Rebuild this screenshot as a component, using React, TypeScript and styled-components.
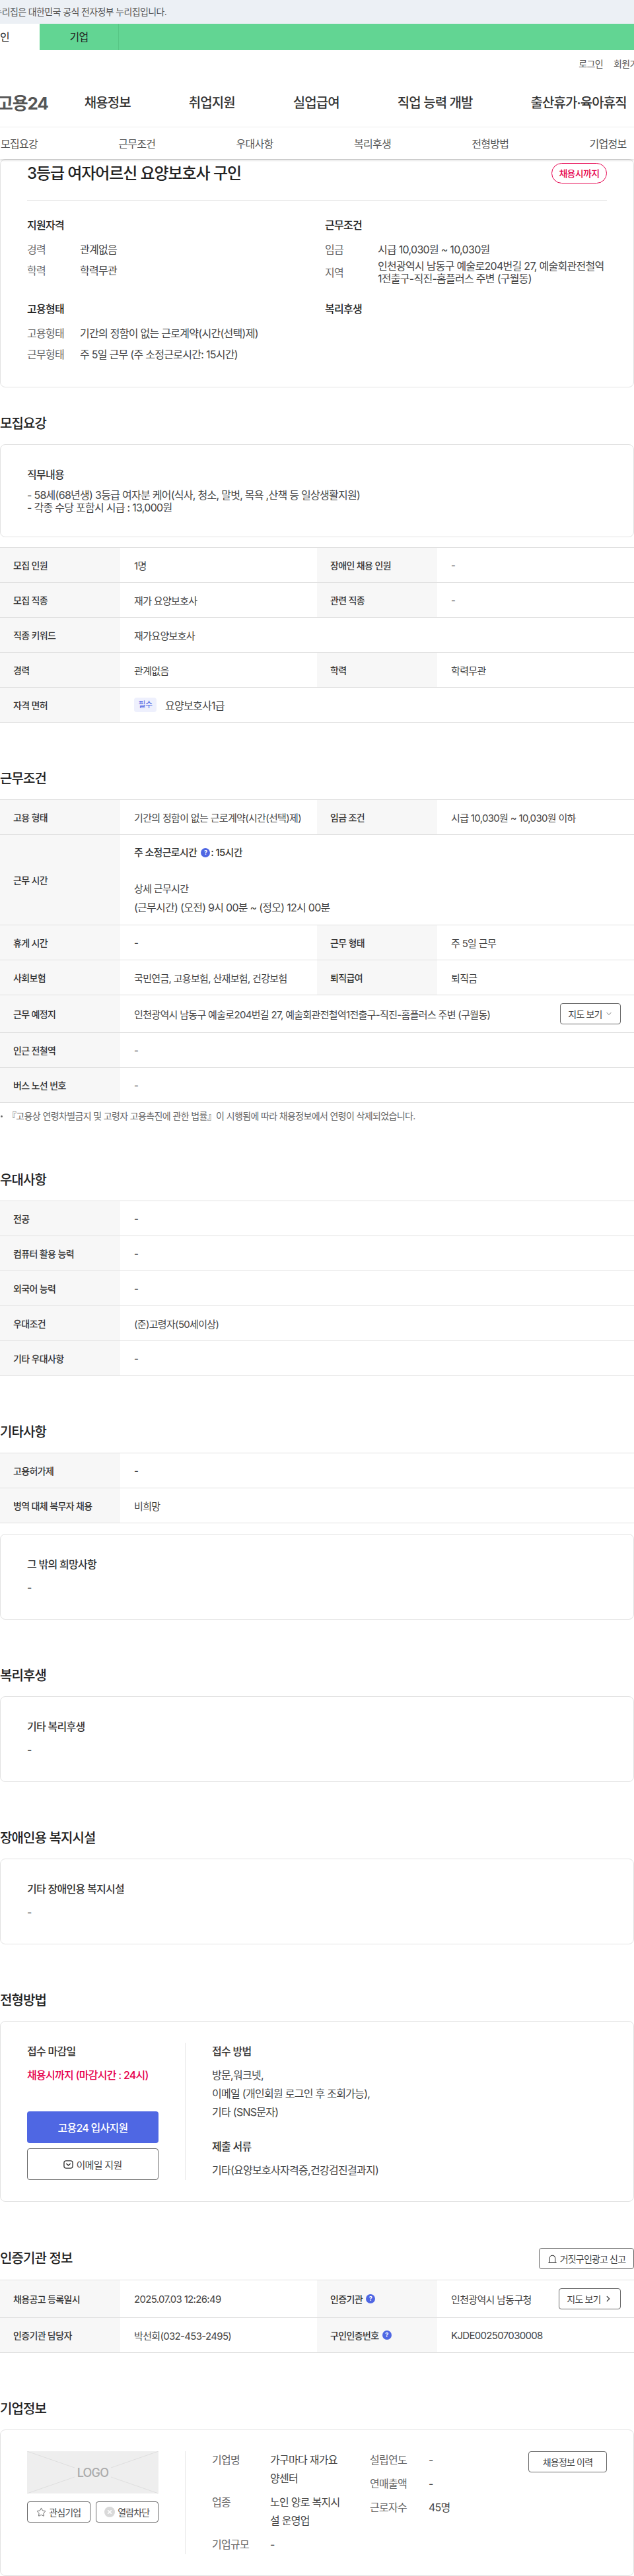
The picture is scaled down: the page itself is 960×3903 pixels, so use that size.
import * as React from 'react';
import styled, { createGlobalStyle } from 'styled-components';
import { ChevronDown, ChevronRight, Star } from 'lucide-react';

const GlobalStyle = createGlobalStyle`
  html, body {
    margin: 0;
    padding: 0;
    background: #fff;
  }
  body {
    font-family: Inter, "Noto Sans CJK KR", "Noto Sans", sans-serif;
    color: #444;
    font-size: 15px;
  }
  * {
    box-sizing: border-box;
    letter-spacing: -0.045em;
  }
`;

const Page = styled.div`
  width: 960px;
  height: 3903px;
  overflow: hidden;
  position: relative;
`;

const GovBanner = styled.div`
  height: 36px;
  background: #ecf0f5;
  color: #555;
  font-size: 14px;
  line-height: 36px;
  white-space: nowrap;
  & > span {
    margin-left: -25px;
    display: inline-block;
  }
`;

const TabBar = styled.div`
  height: 40px;
  background: #62d593;
  display: flex;
  margin-left: -60px;
`;

const Tab = styled.div<{ $active?: boolean }>`
  width: 120px;
  text-align: center;
  line-height: 40px;
  font-size: 16px;
  color: #222;
  background: ${p => (p.$active ? '#fff' : 'transparent')};
  border-right: ${p => (p.$active ? '0' : '1px solid #57c685')};
`;

const UtilBar = styled.div`
  height: 40px;
  display: flex;
  justify-content: flex-end;
  align-items: center;
  gap: 16px;
  margin-right: -18px;
  font-size: 14px;
  color: #555;
`;

const MainNav = styled.nav`
  height: 76px;
  display: flex;
  align-items: center;
  gap: 88px;
  white-space: nowrap;
`;

const Logo = styled.div`
  font-size: 26px;
  font-weight: 700;
  color: #555;
  margin-left: -4px;
  margin-right: -33px;
`;

const NavItem = styled.a`
  font-size: 20px;
  font-weight: 500;
  color: #333;
`;

const SubNav = styled.div`
  height: 49px;
  border-top: 1px solid #eeeeee;
  display: grid;
  grid-template-columns: repeat(6, 178.3px);
  align-items: center;
  padding-left: 1px;
  position: relative;
  z-index: 2;
  box-shadow: 0 2px 3px rgba(0, 0, 0, 0.14);
  background: #fff;
  font-size: 16px;
  color: #555;
`;

const Card = styled.div`
  border: 1px solid #e2e2e2;
  border-radius: 8px;
  background: #fff;
`;

const SummaryCard = styled(Card)`
  height: 346px;
  padding: 0 40px;
`;

const TitleRow = styled.div`
  height: 62px;
  display: flex;
  justify-content: space-between;
  padding-top: 5px;
  border-bottom: 1px solid #e6e6e6;
`;

const JobTitle = styled.h1`
  margin: 0;
  font-size: 24px;
  line-height: 32px;
  font-weight: 500;
  color: #222;
`;

const DeadlinePill = styled.div`
  width: 84px;
  height: 31px;
  border: 1px solid #e6004d;
  border-radius: 16px;
  color: #e6004d;
  font-size: 14px;
  font-weight: 500;
  line-height: 29px;
  text-align: center;
`;

const SummaryGrid = styled.div`
  display: grid;
  grid-template-columns: 451px 427px;
  row-gap: 26px;
  padding-top: 27px;
`;

const GroupTitle = styled.div`
  font-size: 16px;
  line-height: 20px;
  font-weight: 500;
  color: #222;
  margin-bottom: 11px;
`;

const SummaryRow = styled.div`
  min-height: 32px;
  display: flex;
  align-items: center;
  font-size: 16px;
  line-height: 19px;
`;

const SummaryLabel = styled.div`
  width: 80px;
  flex: none;
  color: #666;
`;

const SummaryValue = styled.div`
  flex: 1;
  color: #444;
  white-space: nowrap;
`;

const Section = styled.section<{ $gap?: number }>`
  margin-top: ${p => p.$gap ?? 71}px;
`;

const Heading = styled.h2`
  margin: 0 0 17px;
  font-size: 20px;
  line-height: 28px;
  font-weight: 500;
  color: #222;
`;

const HeadingRow = styled.div`
  height: 32px;
  display: flex;
  justify-content: space-between;
  align-items: center;
  margin-bottom: 16px;
  & > h2 {
    margin: 0;
  }
`;

const TextCard = styled(Card)<{ $height: number; $mt?: number; $mb?: number }>`
  height: ${p => p.$height}px;
  padding: 35px 40px 0;
  margin-top: ${p => p.$mt ?? 0}px;
  margin-bottom: ${p => p.$mb ?? 0}px;
`;

const CardTitle = styled.div`
  font-size: 16px;
  line-height: 20px;
  font-weight: 500;
  color: #333;
`;

const CardBody = styled.div<{ $mt?: number }>`
  margin-top: ${p => p.$mt ?? 16}px;
  font-size: 16px;
  line-height: 19px;
  color: #444;
  white-space: pre-line;
`;

const Table = styled.div`
  border-top: 1px solid #e0e0e0;
`;

const Row = styled.div<{ $h?: number }>`
  height: ${p => p.$h ?? 53}px;
  display: grid;
  grid-template-columns: 182px 298px 182px 298px;
  border-bottom: 1px solid #e0e0e0;
`;

const Label = styled.div`
  background: #f7f7f7;
  padding-left: 20px;
  display: flex;
  align-items: center;
  gap: 5px;
  font-size: 14px;
  font-weight: 500;
  color: #333;
`;

const Value = styled.div<{ $wide?: boolean }>`
  grid-column: ${p => (p.$wide ? 'span 3' : 'auto')};
  padding: 0 20px 0 21px;
  display: flex;
  align-items: center;
  justify-content: space-between;
  color: #444;
  white-space: nowrap;
`;

const WorkHours = styled.div`
  grid-column: span 3;
  padding-left: 21px;
  display: flex;
  flex-direction: column;
  justify-content: center;
  line-height: 20px;
  color: #444;
`;

const WeeklyHours = styled.div`
  font-weight: 500;
  color: #333;
  display: flex;
  align-items: center;
  margin-bottom: 35px;
`;

const WorkDetail = styled.div`
  margin-bottom: 8px;
`;

const WorkSchedule = styled.div`
  font-size: 16px;
`;

const HelpDot = styled.span`
  width: 14px;
  height: 14px;
  border-radius: 50%;
  background: #4f67e3;
  color: #fff;
  font-size: 9px;
  font-weight: 700;
  line-height: 14px;
  text-align: center;
`;

const InlineHelpDot = styled(HelpDot)`
  margin: 0 1px 0 6px;
`;

const RequiredBadge = styled.span`
  width: 34px;
  height: 22px;
  margin-right: 13px;
  border-radius: 4px;
  background: #eef0fd;
  color: #4f67e3;
  font-size: 12px;
  line-height: 22px;
  text-align: center;
`;

const LicenseValue = styled.div`
  grid-column: span 3;
  padding-left: 21px;
  display: flex;
  align-items: center;
  font-size: 16px;
`;

const OutlineButton = styled.button<{ $w?: number; $h?: number }>`
  width: ${p => (p.$w ? `${p.$w}px` : 'auto')};
  height: ${p => p.$h ?? 32}px;
  flex: ${p => (p.$w ? 'none' : '1')};
  padding: 0;
  border: 1px solid #666;
  border-radius: 4px;
  background: #fff;
  display: flex;
  align-items: center;
  justify-content: center;
  gap: 4px;
  font-family: inherit;
  font-size: 14px;
  letter-spacing: -0.06em;
  color: #444;
  white-space: nowrap;
`;

const EmailButton = styled(OutlineButton)`
  font-size: 15px;
  letter-spacing: -0.045em;
`;

const FootNote = styled.p`
  margin: 11px 0 0;
  padding-left: 1px;
  font-size: 14px;
  line-height: 18px;
  color: #666;
  white-space: nowrap;
  &::before {
    content: '';
    display: inline-block;
    width: 3px;
    height: 3px;
    margin: 0 7px 3px 0;
    border-radius: 50%;
    background: #666;
  }
`;

const SplitCard = styled(Card)<{ $height: number }>`
  height: ${p => p.$height}px;
  padding: 32px 40px;
  display: flex;
`;

const SideColumn = styled.div`
  width: 240px;
  flex: none;
  padding-right: 40px;
  border-right: 1px solid #e6e6e6;
  display: flex;
  flex-direction: column;
`;

const MainColumn = styled.div`
  flex: 1;
  padding-left: 40px;
  position: relative;
`;

const ColumnTitle = styled.div`
  margin-top: 3px;
  font-size: 16px;
  line-height: 20px;
  font-weight: 500;
  color: #333;
`;

const DeadlineText = styled.div`
  margin: 16px 0 45px;
  font-size: 16px;
  line-height: 20px;
  font-weight: 500;
  color: #e6004d;
`;

const ApplyButton = styled.button`
  height: 48px;
  padding: 0;
  border: 0;
  border-radius: 4px;
  background: #4f67e3;
  color: #fff;
  font-family: inherit;
  font-size: 16px;
  font-weight: 500;
  margin-bottom: 8px;
`;

const MethodList = styled.div`
  margin-top: 12px;
  font-size: 16px;
  line-height: 28px;
  color: #444;
  white-space: pre-line;
`;

const DocsTitle = styled(ColumnTitle)`
  margin-top: 28px;
`;

const LogoBox = styled.div`
  height: 64px;
  position: relative;
  background: #eeeeee;
  display: flex;
  align-items: center;
  justify-content: center;
  color: #aaa;
  font-size: 18px;
  font-weight: 500;
  & > svg {
    position: absolute;
    inset: 0;
  }
  & > span {
    position: relative;
  }
`;

const CompanyActions = styled.div`
  margin-top: 12px;
  display: flex;
  gap: 8px;
`;

const CompanyInfo = styled.div`
  display: flex;
  margin-top: -1px;
`;

const InfoColumn = styled.div<{ $w: number; $labelW: number; $valueW: number }>`
  width: ${p => p.$w}px;
  flex: none;
  display: grid;
  grid-template-columns: ${p => p.$labelW}px ${p => p.$valueW}px;
  row-gap: 8px;
  align-content: start;
  font-size: 16px;
  line-height: 28px;
`;

const InfoLabel = styled.div`
  color: #666;
`;

const InfoValue = styled.div`
  color: #444;
  word-break: break-all;
`;

const HistoryButton = styled(OutlineButton)`
  position: absolute;
  top: 0;
  right: 0;
`;

function MailIcon() {
  return (
    <svg width="15" height="15" viewBox="0 0 16 16" fill="none" stroke="#333" strokeWidth="1.5">
      <rect x="1" y="2" width="14" height="12" rx="3.5" />
      <path d="M5 7l3 2.5L11 7" strokeLinecap="round" strokeLinejoin="round" />
    </svg>
  );
}

function SirenIcon() {
  return (
    <svg width="15" height="15" viewBox="0 0 16 16" fill="none" stroke="#333" strokeWidth="1.1">
      <path d="M1.5 14h13M3.5 14V7a4.5 4.5 0 0 1 9 0v7" />
    </svg>
  );
}

function BlockIcon() {
  return (
    <svg width="16" height="16" viewBox="0 0 16 16">
      <circle cx="8" cy="8" r="8" fill="#d9d9d9" />
      <path d="M5.2 5.2l5.6 5.6M10.8 5.2l-5.6 5.6" stroke="#fff" strokeWidth="1.6" />
    </svg>
  );
}

function LogoPlaceholder() {
  return (
    <LogoBox>
      <svg width="199" height="64" viewBox="0 0 199 64" stroke="#dedede" fill="none">
        <path d="M0 0l72 25M199 0l-72 25M0 64l72-25M199 64l-72-25" />
      </svg>
      <span>LOGO</span>
    </LogoBox>
  );
}

const navItems = ['채용정보', '취업지원', '실업급여', '직업 능력 개발', '출산휴가·육아휴직'];
const subNavItems = ['모집요강', '근무조건', '우대사항', '복리후생', '전형방법', '기업정보'];

function App() {
  return (
    <Page>
      <GlobalStyle />
      <GovBanner>
        <span>이 누리집은 대한민국 공식 전자정부 누리집입니다.</span>
      </GovBanner>
      <TabBar>
        <Tab $active>개인</Tab>
        <Tab>기업</Tab>
      </TabBar>
      <UtilBar>
        <span>로그인</span>
        <span>회원가입</span>
      </UtilBar>
      <MainNav>
        <Logo>고용24</Logo>
        {navItems.map(item => (
          <NavItem key={item}>{item}</NavItem>
        ))}
      </MainNav>
      <SubNav>
        {subNavItems.map(item => (
          <span key={item}>{item}</span>
        ))}
      </SubNav>

      <SummaryCard>
        <TitleRow>
          <JobTitle>3등급 여자어르신 요양보호사 구인</JobTitle>
          <DeadlinePill>채용시까지</DeadlinePill>
        </TitleRow>
        <SummaryGrid>
          <div>
            <GroupTitle>지원자격</GroupTitle>
            <SummaryRow>
              <SummaryLabel>경력</SummaryLabel>
              <SummaryValue>관계없음</SummaryValue>
            </SummaryRow>
            <SummaryRow>
              <SummaryLabel>학력</SummaryLabel>
              <SummaryValue>학력무관</SummaryValue>
            </SummaryRow>
          </div>
          <div>
            <GroupTitle>근무조건</GroupTitle>
            <SummaryRow>
              <SummaryLabel>임금</SummaryLabel>
              <SummaryValue>시급 10,030원 ~ 10,030원</SummaryValue>
            </SummaryRow>
            <SummaryRow>
              <SummaryLabel>지역</SummaryLabel>
              <SummaryValue>
                인천광역시 남동구 예술로204번길 27, 예술회관전철역
                <br />
                1전출구-직진-홈플러스 주변 (구월동)
              </SummaryValue>
            </SummaryRow>
          </div>
          <div>
            <GroupTitle>고용형태</GroupTitle>
            <SummaryRow>
              <SummaryLabel>고용형태</SummaryLabel>
              <SummaryValue>기간의 정함이 없는 근로계약(시간(선택)제)</SummaryValue>
            </SummaryRow>
            <SummaryRow>
              <SummaryLabel>근무형태</SummaryLabel>
              <SummaryValue>주 5일 근무 (주 소정근로시간: 15시간)</SummaryValue>
            </SummaryRow>
          </div>
          <div>
            <GroupTitle>복리후생</GroupTitle>
          </div>
        </SummaryGrid>
      </SummaryCard>

      <Section $gap={41}>
        <Heading>모집요강</Heading>
        <TextCard $height={141} $mb={15}>
          <CardTitle>직무내용</CardTitle>
          <CardBody $mt={12}>
            {'- 58세(68년생) 3등급 여자분 케어(식사, 청소, 말벗, 목욕 ,산책 등 일상생활지원)\n- 각종 수당 포함시 시급 : 13,000원'}
          </CardBody>
        </TextCard>
        <Table>
          <Row>
            <Label>모집 인원</Label>
            <Value>1명</Value>
            <Label>장애인 채용 인원</Label>
            <Value>-</Value>
          </Row>
          <Row>
            <Label>모집 직종</Label>
            <Value>재가 요양보호사</Value>
            <Label>관련 직종</Label>
            <Value>-</Value>
          </Row>
          <Row>
            <Label>직종 키워드</Label>
            <Value $wide>재가요양보호사</Value>
          </Row>
          <Row>
            <Label>경력</Label>
            <Value>관계없음</Value>
            <Label>학력</Label>
            <Value>학력무관</Value>
          </Row>
          <Row>
            <Label>자격 면허</Label>
            <LicenseValue>
              <RequiredBadge>필수</RequiredBadge>
              요양보호사1급
            </LicenseValue>
          </Row>
        </Table>
      </Section>

      <Section>
        <Heading>근무조건</Heading>
        <Table>
          <Row>
            <Label>고용 형태</Label>
            <Value>기간의 정함이 없는 근로계약(시간(선택)제)</Value>
            <Label>임금 조건</Label>
            <Value>시급 10,030원 ~ 10,030원 이하</Value>
          </Row>
          <Row $h={137}>
            <Label>근무 시간</Label>
            <WorkHours>
              <WeeklyHours>
                주 소정근로시간
                <InlineHelpDot>?</InlineHelpDot>: 15시간
              </WeeklyHours>
              <WorkDetail>상세 근무시간</WorkDetail>
              <WorkSchedule>(근무시간) (오전) 9시 00분 ~ (정오) 12시 00분</WorkSchedule>
            </WorkHours>
          </Row>
          <Row>
            <Label>휴게 시간</Label>
            <Value>-</Value>
            <Label>근무 형태</Label>
            <Value>주 5일 근무</Value>
          </Row>
          <Row>
            <Label>사회보험</Label>
            <Value>국민연금, 고용보험, 산재보험, 건강보험</Value>
            <Label>퇴직급여</Label>
            <Value>퇴직금</Value>
          </Row>
          <Row $h={57}>
            <Label>근무 예정지</Label>
            <Value $wide>
              인천광역시 남동구 예술로204번길 27, 예술회관전철역1전출구-직진-홈플러스 주변 (구월동)
              <OutlineButton $w={92}>
                지도 보기
                <ChevronDown size={12} strokeWidth={1.5} />
              </OutlineButton>
            </Value>
          </Row>
          <Row>
            <Label>인근 전철역</Label>
            <Value $wide>-</Value>
          </Row>
          <Row>
            <Label>버스 노선 번호</Label>
            <Value $wide>-</Value>
          </Row>
        </Table>
        <FootNote>『고용상 연령차별금지 및 고령자 고용촉진에 관한 법률』이 시행됨에 따라 채용정보에서 연령이 삭제되었습니다.</FootNote>
      </Section>

      <Section $gap={74}>
        <Heading>우대사항</Heading>
        <Table>
          <Row>
            <Label>전공</Label>
            <Value $wide>-</Value>
          </Row>
          <Row>
            <Label>컴퓨터 활용 능력</Label>
            <Value $wide>-</Value>
          </Row>
          <Row>
            <Label>외국어 능력</Label>
            <Value $wide>-</Value>
          </Row>
          <Row>
            <Label>우대조건</Label>
            <Value $wide>(준)고령자(50세이상)</Value>
          </Row>
          <Row>
            <Label>기타 우대사항</Label>
            <Value $wide>-</Value>
          </Row>
        </Table>
      </Section>

      <Section>
        <Heading>기타사항</Heading>
        <Table>
          <Row>
            <Label>고용허가제</Label>
            <Value $wide>-</Value>
          </Row>
          <Row>
            <Label>병역 대체 복무자 채용</Label>
            <Value $wide>비희망</Value>
          </Row>
        </Table>
        <TextCard $height={130} $mt={16}>
          <CardTitle>그 밖의 희망사항</CardTitle>
          <CardBody>-</CardBody>
        </TextCard>
      </Section>

      <Section>
        <Heading>복리후생</Heading>
        <TextCard $height={130}>
          <CardTitle>기타 복리후생</CardTitle>
          <CardBody>-</CardBody>
        </TextCard>
      </Section>

      <Section>
        <Heading>장애인용 복지시설</Heading>
        <TextCard $height={130}>
          <CardTitle>기타 장애인용 복지시설</CardTitle>
          <CardBody>-</CardBody>
        </TextCard>
      </Section>

      <Section>
        <Heading>전형방법</Heading>
        <SplitCard $height={274}>
          <SideColumn>
            <ColumnTitle>접수 마감일</ColumnTitle>
            <DeadlineText>채용시까지 (마감시간 : 24시)</DeadlineText>
            <ApplyButton>고용24 입사지원</ApplyButton>
            <EmailButton $h={48}>
              <MailIcon />
              이메일 지원
            </EmailButton>
          </SideColumn>
          <MainColumn>
            <ColumnTitle>접수 방법</ColumnTitle>
            <MethodList>{'방문,워크넷,\n이메일 (개인회원 로그인 후 조회가능),\n기타 (SNS문자)'}</MethodList>
            <DocsTitle>제출 서류</DocsTitle>
            <MethodList>기타(요양보호사자격증,건강검진결과지)</MethodList>
          </MainColumn>
        </SplitCard>
      </Section>

      <Section $gap={70}>
        <HeadingRow>
          <Heading>인증기관 정보</Heading>
          <OutlineButton $w={144}>
            <SirenIcon />
            거짓구인광고 신고
          </OutlineButton>
        </HeadingRow>
        <Table>
          <Row $h={57}>
            <Label>채용공고 등록일시</Label>
            <Value>2025.07.03 12:26:49</Value>
            <Label>
              인증기관
              <HelpDot>?</HelpDot>
            </Label>
            <Value>
              인천광역시 남동구청
              <OutlineButton $w={94}>
                지도 보기
                <ChevronRight size={14} strokeWidth={2.2} />
              </OutlineButton>
            </Value>
          </Row>
          <Row>
            <Label>인증기관 담당자</Label>
            <Value>박선희(032-453-2495)</Value>
            <Label>
              구인인증번호
              <HelpDot>?</HelpDot>
            </Label>
            <Value>KJDE002507030008</Value>
          </Row>
        </Table>
      </Section>

      <Section>
        <Heading>기업정보</Heading>
        <SplitCard $height={222}>
          <SideColumn>
            <LogoPlaceholder />
            <CompanyActions>
              <OutlineButton>
                <Star size={15} strokeWidth={1.3} />
                관심기업
              </OutlineButton>
              <OutlineButton>
                <BlockIcon />
                열람차단
              </OutlineButton>
            </CompanyActions>
          </SideColumn>
          <MainColumn>
            <CompanyInfo>
              <InfoColumn $w={239} $labelW={88} $valueW={110}>
                <InfoLabel>기업명</InfoLabel>
                <InfoValue>가구마다 재가요양센터</InfoValue>
                <InfoLabel>업종</InfoLabel>
                <InfoValue>노인 양로 복지시설 운영업</InfoValue>
                <InfoLabel>기업규모</InfoLabel>
                <InfoValue>-</InfoValue>
              </InfoColumn>
              <InfoColumn $w={200} $labelW={89} $valueW={100}>
                <InfoLabel>설립연도</InfoLabel>
                <InfoValue>-</InfoValue>
                <InfoLabel>연매출액</InfoLabel>
                <InfoValue>-</InfoValue>
                <InfoLabel>근로자수</InfoLabel>
                <InfoValue>45명</InfoValue>
              </InfoColumn>
            </CompanyInfo>
            <HistoryButton $w={119}>채용정보 이력</HistoryButton>
          </MainColumn>
        </SplitCard>
      </Section>
    </Page>
  );
}

export default App;
